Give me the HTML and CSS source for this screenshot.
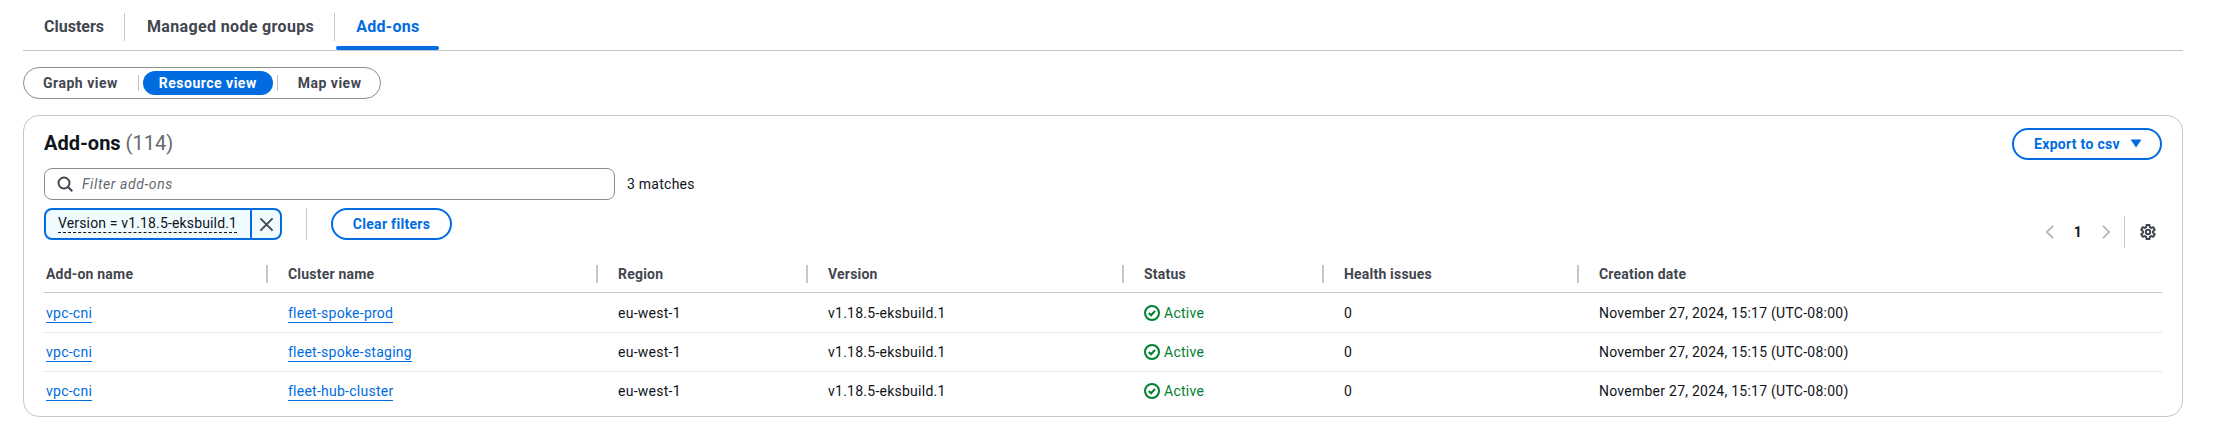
FILE: index.html
```html
<!DOCTYPE html>
<html lang="en">
<head>
<meta charset="utf-8">
<title>Add-ons</title>
<link rel="stylesheet" href="styles.css">
</head>
<body>
<nav class="tabs">
  <a class="tab">Clusters</a>
  <a class="tab">Managed node groups</a>
  <a class="tab active">Add-ons</a>
</nav>
<div class="segments">
  <span class="seg">Graph view</span>
  <span class="seg-sep"></span>
  <span class="seg selected">Resource view</span>
  <span class="seg-sep"></span>
  <span class="seg">Map view</span>
</div>
<section class="card">
  <header class="card-head">
    <div class="head-left">
      <h2 class="title">Add-ons <span class="count">(114)</span></h2>
      <div class="filter-row">
        <div class="search">
          <svg class="search-icon" viewBox="0 0 16 16"><circle cx="7" cy="7" r="5.5"/><path d="M11 11l4.3 4.3"/></svg>
          <span class="placeholder">Filter add-ons</span>
        </div>
        <span class="matches">3 matches</span>
      </div>
      <div class="token-row">
        <div class="token">
          <span class="token-label"><span class="token-text">Version = v1.18.5-eksbuild.1</span></span>
          <span class="token-x"><svg viewBox="0 0 16 16"><path d="M1.5 1.5 14.5 14.5M14.5 1.5 1.5 14.5"/></svg></span>
        </div>
        <span class="token-sep"></span>
        <span class="btn clear">Clear filters</span>
      </div>
    </div>
    <div class="head-right">
      <span class="btn export">Export to csv <svg class="caret" viewBox="0 0 16 16"><path d="M2.5 3.5h11L8 11.5z"/></svg></span>
      <div class="pager">
        <svg class="chev" viewBox="0 0 16 16"><path d="M11.5 1 4.5 8l7 7"/></svg>
        <span class="page-num">1</span>
        <svg class="chev" viewBox="0 0 16 16"><path d="m4.5 1 7 7-7 7"/></svg>
        <span class="pager-sep"></span>
        <svg class="gear" viewBox="0 0 16 16"><circle cx="8" cy="8" r="2.2"/><path d="M6.6 1h2.8l.5 2.1 1.3.75 2.1-.6 1.4 2.45-1.6 1.5v1.6l1.6 1.5-1.4 2.45-2.1-.6-1.3.75-.5 2.1H6.6l-.5-2.1-1.3-.75-2.1.6-1.4-2.45 1.6-1.5v-1.6l-1.6-1.5 1.4-2.45 2.1.6 1.3-.75z"/></svg>
      </div>
    </div>
  </header>
  <table class="grid">
    <colgroup>
      <col class="c1"><col class="c2"><col class="c3"><col class="c4"><col class="c5"><col class="c6"><col class="c7">
    </colgroup>
    <thead>
      <tr>
        <th><span class="th-in">Add-on name</span></th>
        <th><span class="th-in">Cluster name</span></th>
        <th><span class="th-in">Region</span></th>
        <th><span class="th-in">Version</span></th>
        <th><span class="th-in">Status</span></th>
        <th><span class="th-in">Health issues</span></th>
        <th class="last"><span class="th-in">Creation date</span></th>
      </tr>
    </thead>
    <tbody>
      <tr>
        <td><a class="link">vpc-cni</a></td>
        <td><a class="link">fleet-spoke-prod</a></td>
        <td>eu-west-1</td>
        <td>v1.18.5-eksbuild.1</td>
        <td><span class="status"><svg viewBox="0 0 16 16"><circle cx="8" cy="8" r="7"/><path d="m4.8 8 2.2 2.2 4-4.2"/></svg>Active</span></td>
        <td>0</td>
        <td>November 27, 2024, 15:17 (UTC-08:00)</td>
      </tr>
      <tr>
        <td><a class="link">vpc-cni</a></td>
        <td><a class="link">fleet-spoke-staging</a></td>
        <td>eu-west-1</td>
        <td>v1.18.5-eksbuild.1</td>
        <td><span class="status"><svg viewBox="0 0 16 16"><circle cx="8" cy="8" r="7"/><path d="m4.8 8 2.2 2.2 4-4.2"/></svg>Active</span></td>
        <td>0</td>
        <td>November 27, 2024, 15:15 (UTC-08:00)</td>
      </tr>
      <tr>
        <td><a class="link">vpc-cni</a></td>
        <td><a class="link">fleet-hub-cluster</a></td>
        <td>eu-west-1</td>
        <td>v1.18.5-eksbuild.1</td>
        <td><span class="status"><svg viewBox="0 0 16 16"><circle cx="8" cy="8" r="7"/><path d="m4.8 8 2.2 2.2 4-4.2"/></svg>Active</span></td>
        <td>0</td>
        <td>November 27, 2024, 15:17 (UTC-08:00)</td>
      </tr>
    </tbody>
  </table>
</section>
</body>
</html>
```
FILE: styles.css
```css
* { box-sizing: border-box; }
html, body { margin: 0; padding: 0; background: #fff; }
body { font-family: Roboto, "Liberation Sans", sans-serif; font-size: 14px; letter-spacing: .25px; color: #0f141a; height: 433px; overflow: hidden; }

.tabs { display: flex; margin: 9px 30px 0 23px; height: 42px; border-bottom: 1px solid #c6c6cd; }
.tab { position: relative; font-size: 16px; font-weight: 700; letter-spacing: .35px; color: #424650; height: 28px; line-height: 28px; margin-top: 4px; padding: 0 20px 0 22px; border-right: 1px solid #c6c6cd; }
.tab:first-child { padding-left: 21px; letter-spacing: 0; }
.tab.active { color: #006ce0; border-right: 0; padding: 0 19px 0 20px; margin-left: 1px; letter-spacing: .3px; }
.tab.active::after { content: ""; position: absolute; left: 0; right: 0; bottom: -9px; height: 4px; background: #006ce0; border-radius: 2px; }

.segments { display: inline-flex; align-items: center; height: 32px; margin: 16px 0 0 23px; padding: 0 3px; border: 1px solid #8c8c94; border-radius: 16px; font-weight: 700; letter-spacing: .5px; color: #424650; vertical-align: top; }
.seg { height: 24px; line-height: 24px; padding: 0 16px; border-radius: 12px; }
.seg.selected { background: #006ce0; color: #fff; }
.seg-sep { width: 1px; height: 16px; background: #c6c6cd; margin: 0 4px; }

.card { margin: 16px 30px 0 23px; height: 302px; border: 1px solid #c6c6cd; border-radius: 16px; padding: 12px 20px 0; }
.card-head { display: flex; justify-content: space-between; height: 128px; }
.head-left { display: flex; flex-direction: column; }
.head-right { display: flex; flex-direction: column; align-items: flex-end; }
.title { margin: 0; font-size: 20px; font-weight: 700; letter-spacing: 0; line-height: 30px; height: 40px; color: #0f141a; }
.count { font-weight: 400; color: #656871; }

.filter-row { display: flex; align-items: center; gap: 12px; }
.search { display: flex; align-items: center; width: 571px; height: 32px; border: 1px solid #8c8c94; border-radius: 8px; padding: 0 12px; }
.search-icon { width: 16px; height: 16px; fill: none; stroke: #424650; stroke-width: 2; margin-right: 9px; }
.placeholder { font-style: italic; letter-spacing: .6px; color: #656871; }
.matches { color: #0f141a; }

.token-row { display: flex; align-items: center; margin-top: 8px; }
.token { display: flex; width: 238px; height: 32px; border: 2px solid #006ce0; border-radius: 8px; background: #f0fbff; }
.token-label { flex: 1; padding: 0 0 0 12px; display: flex; align-items: center; letter-spacing: .15px; }
.token-text { border-bottom: 1px dashed #0f141a; line-height: 17px; }
.token-x { width: 30px; border-left: 2px solid #006ce0; display: flex; align-items: center; justify-content: center; }
.token-x svg { width: 15px; height: 15px; fill: none; stroke: #424650; stroke-width: 2; }
.token-sep { width: 1px; height: 32px; background: #c6c6cd; margin: 0 24px; }

.btn { display: inline-flex; align-items: center; justify-content: center; height: 32px; border: 2px solid #006ce0; border-radius: 16px; color: #006ce0; font-weight: 700; letter-spacing: .3px; }
.clear { width: 121px; }
.export { width: 150px; gap: 8px; padding-left: 4px; }
.caret { width: 16px; height: 16px; fill: #006ce0; }

.pager { display: flex; align-items: center; height: 32px; margin-top: 56px; }
.chev { width: 14px; height: 16px; fill: none; stroke: #b4b4bb; stroke-width: 2; }
.page-num { font-weight: 700; width: 42px; text-align: center; }
.pager-sep { width: 1px; height: 32px; background: #c6c6cd; margin: 0 15px 0 11px; }
.gear { width: 16px; height: 16px; fill: none; stroke: #424650; stroke-width: 2; margin-right: 6px; }

.grid { width: 100%; table-layout: fixed; border-collapse: separate; border-spacing: 0; }
.c1 { width: 224px; } .c2 { width: 330px; } .c3 { width: 210px; } .c4 { width: 316px; } .c5 { width: 200px; } .c6 { width: 255px; }
th { height: 37px; padding: 9px 0 0; vertical-align: top; text-align: left; font-weight: 700; letter-spacing: .2px; color: #424650; border-bottom: 1px solid #c6c6cd; }
.th-in { display: block; height: 18px; line-height: 18px; padding-left: 20px; border-right: 2px solid #c6c6cd; }
th:first-child .th-in { padding-left: 2px; }
.last .th-in { border-right: 0; }
td { height: 39px; padding: 9px 0 0 20px; vertical-align: top; border-bottom: 1px solid #e8e8eb; line-height: 20px; }
td:first-child { padding-left: 2px; }
tbody tr:first-child td { height: 40px; padding-top: 10px; }
tbody tr:last-child td { border-bottom: 0; }
.link { color: #006ce0; border-bottom: 1px solid #006ce0; padding-bottom: 1px; }
.status { display: inline-flex; align-items: center; gap: 4px; color: #00802f; }
.status svg { width: 16px; height: 16px; fill: none; stroke: #00802f; stroke-width: 2; }
```
